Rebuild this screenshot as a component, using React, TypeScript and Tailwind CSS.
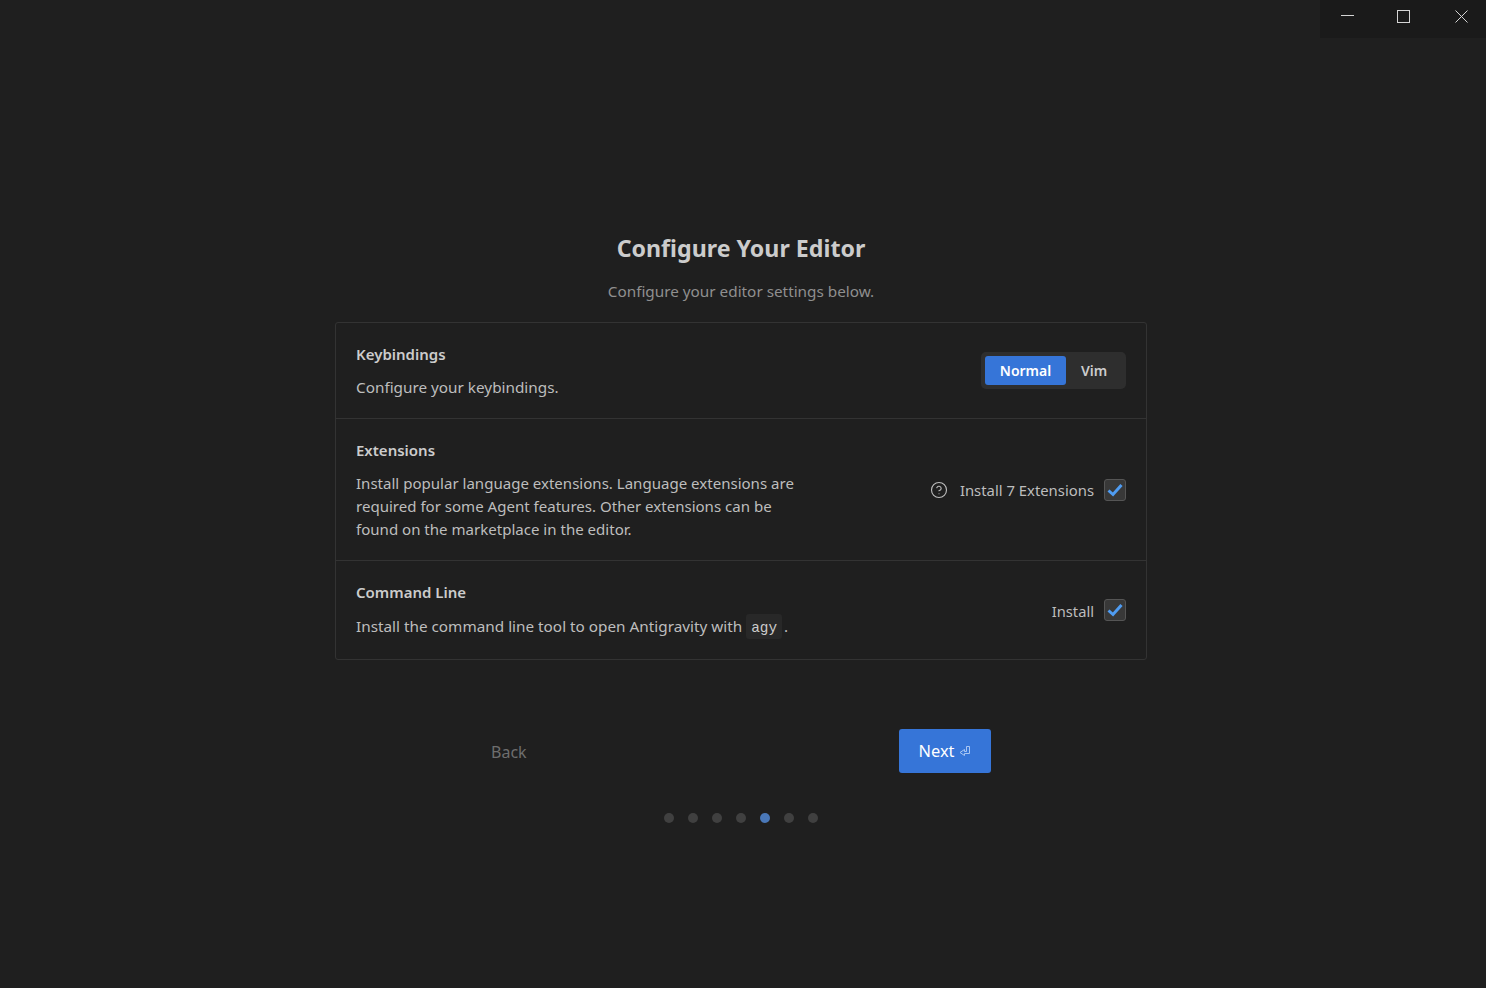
import { CircleHelp } from "lucide-react";

const sans = "font-['Noto_Sans','Open_Sans',sans-serif]";

const Checkbox = () => (
  <span className="flex h-[22px] w-[22px] items-center justify-center rounded-[3px] border border-[#555555] bg-[#383838]">
    <svg width="16" height="14" viewBox="0 0 16 14" fill="none" className="text-[#4f9cf2]">
      <path d="M1.5 7.5 L6 11.5 L14.5 2" stroke="currentColor" strokeWidth="3" />
    </svg>
  </span>
);

const WindowControls = () => (
  <div className="absolute right-0 top-0 flex h-[38px] w-[166px] items-start bg-[#1a1a1a] text-[#d4d4d4]">
    <span className="ml-[21px] mt-[15px] block h-px w-[13px] bg-[#d4d4d4]" />
    <span className="ml-[43px] mt-[10px] block h-[13px] w-[13px] border border-[#d4d4d4]" />
    <svg width="13" height="13" viewBox="0 0 13 13" className="ml-[45px] mt-[10px]" stroke="currentColor" strokeWidth="1">
      <path d="M0.5 0.5 L12.5 12.5 M12.5 0.5 L0.5 12.5" />
    </svg>
  </div>
);

export default function App() {
  return (
    <div className={`relative min-h-[988px] bg-[#1f1f1f] pr-1 pt-[233px] ${sans}`}>
      <WindowControls />

      <div className="mx-auto flex w-[812px] flex-col items-center">
        <h1 className="h-[30px] text-[23.2px] font-bold leading-[30px] text-[#cccccc]">
          Configure Your Editor
        </h1>
        <p className="mt-[17px] h-[22px] text-[15.3px] leading-[22px] text-[#8f8f8f]">
          Configure your editor settings below.
        </p>

        <div className="mt-5 w-full rounded-[3px] border border-[#333333] text-[15.3px] text-[#bdbdbd]">
          <section className="flex h-[96px] items-center justify-between border-b border-[#333333] pl-5 pr-5">
            <div className="pt-px">
              <h2 className="text-[15px] font-semibold leading-[23px] text-[#cccccc]">Keybindings</h2>
              <p className="mt-2.5 leading-[23px]">Configure your keybindings.</p>
            </div>
            <div className="flex h-[37px] w-[145px] items-center rounded-[5px] bg-[#2e2e2e] p-1 text-[14px]">
              <span className="flex h-[29px] w-[81px] items-center justify-center rounded-[3px] bg-[#3675d8] font-semibold text-white">
                Normal
              </span>
              <span className="flex flex-1 items-center justify-center font-semibold text-[#cccccc]">Vim</span>
            </div>
          </section>

          <section className="flex h-[142px] items-center justify-between border-b border-[#333333] pl-5 pr-5">
            <div className="w-[450px]">
              <h2 className="text-[15px] font-semibold leading-[23px] text-[#cccccc]">Extensions</h2>
              <p className="mt-2.5 text-[15.05px] leading-[23px]">
                Install popular language extensions. Language extensions are required for some Agent features. Other
                extensions can be found on the marketplace in the editor.
              </p>
            </div>
            <div className="flex h-[24px] items-center pt-px">
              <CircleHelp size={18} strokeWidth={1.5} className="text-[#bdbdbd]" />
              <span className="ml-[12px] mr-2.5 text-[14.85px]">Install 7 Extensions</span>
              <Checkbox />
            </div>
          </section>

          <section className="flex h-[98px] items-center justify-between pl-5 pr-5">
            <div>
              <h2 className="text-[15px] font-semibold leading-[23px] text-[#cccccc]">Command Line</h2>
              <p className="mt-2.5 flex items-center leading-[23px]">
                Install the command line tool to open Antigravity with
                <code className="ml-1 rounded-[3px] bg-[#282828] px-[5px] pt-1 font-['Liberation_Mono',monospace] text-[14.4px] leading-[21px] text-[#cccccc]">
                  agy
                </code>
                <span className="ml-[2px]">.</span>
              </p>
            </div>
            <div className="flex items-center">
              <span className="mr-2.5 pt-[2px] text-[14.7px]">Install</span>
              <Checkbox />
            </div>
          </section>
        </div>

        <div className="mt-[69px] flex w-[500px] items-center justify-between">
          <span className="pt-px text-[16px] text-[#6e6e6e]">Back</span>
          <button className="flex h-11 w-[92px] items-center justify-center gap-[5px] rounded-[3px] bg-[#3675d8] text-[16.4px] text-white">
            Next
            <svg width="12" height="12" viewBox="0 0 12 12" fill="none" stroke="#a9c6f2" strokeWidth="1">
              <path d="M7.5 1.5 H10.5 V8.5 H5.5 V10.5 L1 7.5 L5.5 4.5 V6.5 H7.5 Z" />
            </svg>
          </button>
        </div>

        <div className="mt-10 flex gap-[14px]">
          {[0, 1, 2, 3, 4, 5, 6].map((i) => (
            <span
              key={i}
              className={i === 4 ? "h-2.5 w-2.5 rounded-full bg-[#4a78b8]" : "h-2.5 w-2.5 rounded-full bg-[#404040]"}
            />
          ))}
        </div>
      </div>
    </div>
  );
}
